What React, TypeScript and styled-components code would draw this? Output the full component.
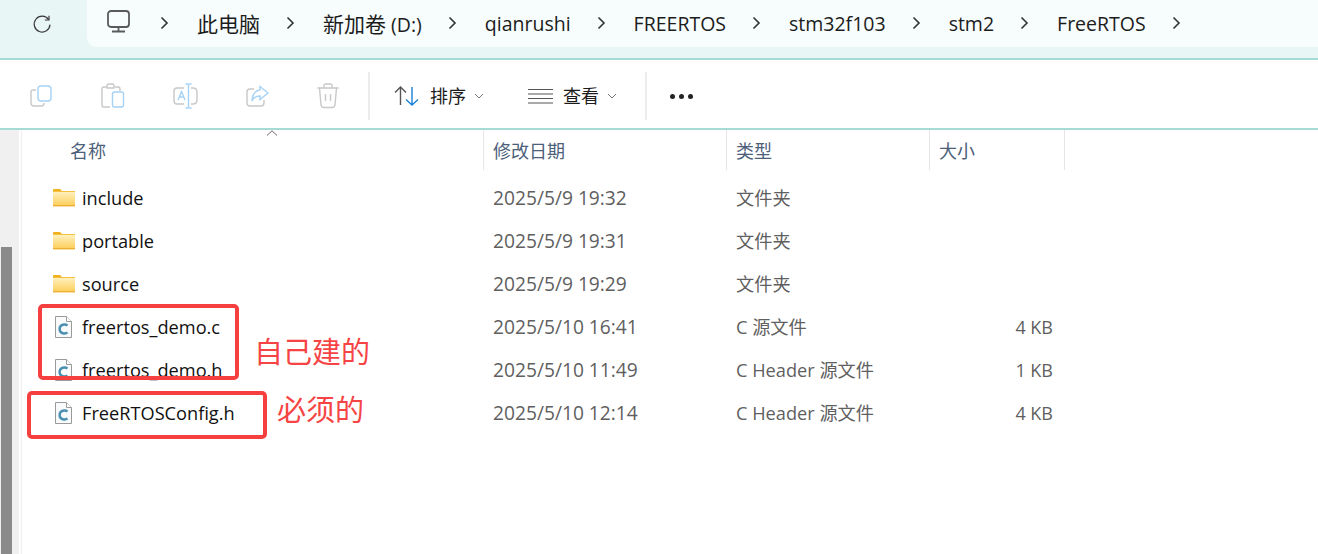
import React from "react";
import styled, { createGlobalStyle } from "styled-components";

const FONT = `"Open Sans", "Noto Sans CJK SC", sans-serif`;

const GlobalStyle = createGlobalStyle`
  html, body {
    margin: 0;
    padding: 0;
    background: #fff;
    overflow: hidden;
  }
  * {
    box-sizing: border-box;
  }
`;

const CRUMBS = [
  { cjk: "此电脑", text: "" },
  { cjk: "新加卷", text: " (D:)" },
  { cjk: "", text: "qianrushi" },
  { cjk: "", text: "FREERTOS" },
  { cjk: "", text: "stm32f103" },
  { cjk: "", text: "stm2" },
  { cjk: "", text: "FreeRTOS" },
];

const ROWS = [
  { name: "include", date: "2025/5/9 19:32", type: "文件夹", size: "", folder: true },
  { name: "portable", date: "2025/5/9 19:31", type: "文件夹", size: "", folder: true },
  { name: "source", date: "2025/5/9 19:29", type: "文件夹", size: "", folder: true },
  { name: "freertos_demo.c", date: "2025/5/10 16:41", type: "C 源文件", size: "4 KB", folder: false },
  { name: "freertos_demo.h", date: "2025/5/10 11:49", type: "C Header 源文件", size: "1 KB", folder: false },
  { name: "FreeRTOSConfig.h", date: "2025/5/10 12:14", type: "C Header 源文件", size: "4 KB", folder: false },
];

function Chevron() {
  return (
    <svg width="10" height="14" viewBox="0 0 10 14" fill="none" stroke="#333" strokeWidth="1.6">
      <path d="M1.5 1.5 L7 7 L1.5 12.5" />
    </svg>
  );
}

function SmallCaret() {
  return (
    <svg width="10" height="6" viewBox="0 0 10 6" fill="none" stroke="#777" strokeWidth="1">
      <path d="M1 1 L5 5 L9 1" />
    </svg>
  );
}

function FolderIcon() {
  return (
    <svg width="22" height="18" viewBox="0 0 22 18">
      <defs>
        <linearGradient id="folderFill" x1="0" y1="0" x2="0" y2="1">
          <stop offset="0" stopColor="#fff0bd" />
          <stop offset="1" stopColor="#fdd060" />
        </linearGradient>
      </defs>
      <path d="M0 1 Q0 0 1 0 H7 L9 2 H0 Z" fill="#f0b020" />
      <rect x="0" y="2" width="22" height="1" fill="#f5c040" />
      <rect x="0" y="3" width="22" height="13" fill="url(#folderFill)" />
      <rect x="0" y="16" width="22" height="1.4" fill="#eeb030" />
    </svg>
  );
}

function CFileIcon() {
  return (
    <svg width="17" height="22" viewBox="0 0 17 22">
      <path d="M0.5 0.5 H11.5 L16.5 5.5 V21.5 H0.5 Z" fill="#f8fafb" stroke="#9a9a9a" />
      <path d="M11.5 0.5 V5.5 H16.5" fill="#fff" stroke="#9a9a9a" />
      <path
        d="M12.4 9.6 C10.6 7.8 4.6 8 4.6 13 C4.6 18 10.6 18.2 12.4 16.4"
        fill="none"
        stroke="#4a8fb0"
        strokeWidth="2.4"
      />
    </svg>
  );
}

export default function App() {
  return (
    <Page>
      <GlobalStyle />
      <AddressBand>
        <RefreshButton>
          <svg width="20" height="20" viewBox="0 0 20 20" fill="none" stroke="#3a3a3a" strokeWidth="1.2">
            <path d="M16.6 5.6 A7.9 7.9 0 1 0 18 10.6" />
            <path d="M17 1.8 V6 H12.8" />
          </svg>
        </RefreshButton>
        <Breadcrumb>
          <PcIcon>
            <svg width="24" height="23" viewBox="0 0 24 23" fill="none" stroke="#5a5a5a" strokeWidth="1.8">
              <rect x="1" y="1" width="21" height="16" rx="3" />
              <path d="M11.5 17 V21 M5 21.5 H18" />
            </svg>
          </PcIcon>
          {CRUMBS.map((c) => (
            <Crumb key={c.cjk + c.text}>
              <Chevron />
              <CrumbText>
                {c.cjk && <CrumbCjk>{c.cjk}</CrumbCjk>}
                {c.text}
              </CrumbText>
            </Crumb>
          ))}
          <LastChevron>
            <Chevron />
          </LastChevron>
        </Breadcrumb>
      </AddressBand>

      <Toolbar>
        <ActionGroup>
          <ActionIcon>
            <svg width="24" height="24" viewBox="0 0 24 24" fill="none" strokeWidth="1.4">
              <path d="M7 6 H4 Q2 6 2 8 V19 Q2 22 5 22 H12 Q15 22 15 19" stroke="#c8c8c8" />
              <rect x="9" y="2" width="13" height="15" rx="3" stroke="#a5d2f5" />
            </svg>
          </ActionIcon>
          <ActionIcon>
            <svg width="24" height="26" viewBox="0 0 24 26" fill="none" strokeWidth="1.4">
              <path d="M6 4 H3 Q1 4 1 6 V22 Q1 24 3 24 H9" stroke="#c8c8c8" />
              <path d="M6 5 V2.5 Q6 1 8 1 H11 Q13 1 13 2.5 V5 Z" stroke="#c8c8c8" />
              <path d="M14 4 H17 Q19 4 19 6 V8" stroke="#c8c8c8" />
              <rect x="11.5" y="9" width="11" height="15" rx="2" stroke="#a5d2f5" />
            </svg>
          </ActionIcon>
          <ActionIcon>
            <svg width="26" height="26" viewBox="0 0 26 26" fill="none" strokeWidth="1.4">
              <path d="M11 5 H4 Q1 5 1 8 V18 Q1 21 4 21 H11" stroke="#c8c8c8" />
              <path d="M18 5 H20 Q24 5 24 9 V17 Q24 21 20 21 H18" stroke="#c8c8c8" />
              <path d="M5 17 L8.5 8.5 L12 17 M6.2 14 H10.8" stroke="#a5d2f5" />
              <path d="M15.5 2 V24 M12.5 1 H18.5 M12.5 25 H18.5" stroke="#a5d2f5" />
            </svg>
          </ActionIcon>
          <ActionIcon>
            <svg width="24" height="24" viewBox="0 0 24 24" fill="none" strokeWidth="1.4">
              <path d="M9 5 H5 Q2 5 2 8 V19 Q2 22 5 22 H16 Q19 22 19 19 V16" stroke="#c8c8c8" />
              <path d="M15 2.5 L23 9 L15 15.5 V12 Q9 12 7 17 Q7.5 7 15 6 Z" stroke="#a5d2f5" />
            </svg>
          </ActionIcon>
          <ActionIcon>
            <svg width="22" height="26" viewBox="0 0 22 26" fill="none" stroke="#c8c8c8" strokeWidth="1.4">
              <path d="M0.5 5 H21.5 M7 5 V3 Q7 1 9 1 H13 Q15 1 15 3 V5" />
              <path d="M2.5 5 L4 22 Q4.3 24.5 7 24.5 H15 Q17.7 24.5 18 22 L19.5 5" />
              <path d="M8.5 11 V18 M13.5 11 V18" />
            </svg>
          </ActionIcon>
        </ActionGroup>
        <Divider />
        <MenuButton $width={158} $pad={24}>
          <svg width="26" height="22" viewBox="0 0 26 22" fill="none" strokeWidth="1.4">
            <path d="M6.5 20 V2 M1 7.5 L6.5 2 L12 7.5" stroke="#555" />
            <path d="M18 2 V20 M12 14.5 L18 20 L24 14.5" stroke="#1a80d8" />
          </svg>
          <MenuLabel>排序</MenuLabel>
          <SmallCaret />
        </MenuButton>
        <MenuButton $width={117} $pad={0}>
          <svg width="25" height="16" viewBox="0 0 25 16" fill="none" stroke="#555" strokeWidth="1.2">
            <path d="M0 1.5 H25 M0 6 H25 M0 10.5 H25 M0 15 H25" />
          </svg>
          <MenuLabel>查看</MenuLabel>
          <SmallCaret />
        </MenuButton>
        <Divider />
        <MoreDots>
          <Dot />
          <Dot />
          <Dot />
        </MoreDots>
      </Toolbar>

      <Main>
        <ScrollTrack>
          <ScrollThumb />
        </ScrollTrack>
        <ListArea>
          <SortCaret>
            <svg width="12" height="6" viewBox="0 0 12 6" fill="none" stroke="#666" strokeWidth="1">
              <path d="M1 5.5 L6 0.8 L11 5.5" />
            </svg>
          </SortCaret>
          <HeaderRow>
            <HeaderCell $width={462} $pad={48}>名称</HeaderCell>
            <HeaderCell $width={243} $pad={9}>修改日期</HeaderCell>
            <HeaderCell $width={203} $pad={9}>类型</HeaderCell>
            <HeaderCell $width={135} $pad={9}>大小</HeaderCell>
          </HeaderRow>
          <Rows>
            {ROWS.map((r) => (
              <Row key={r.name}>
                <NameCell>
                  <IconSlot $file={!r.folder}>{r.folder ? <FolderIcon /> : <CFileIcon />}</IconSlot>
                  <NameText>{r.name}</NameText>
                </NameCell>
                <DateCell>{r.date}</DateCell>
                <TypeCell>{r.type}</TypeCell>
                <SizeCell>{r.size}</SizeCell>
              </Row>
            ))}
          </Rows>
          <RedBox $left={16} $top={174} $width={201} $height={76} />
          <RedBox $left={5} $top={261} $width={240} $height={48} />
          <Note $left={232} $top={200}>自己建的</Note>
          <Note $left={255} $top={258}>必须的</Note>
        </ListArea>
      </Main>
    </Page>
  );
}

const Page = styled.div`
  width: 1318px;
  height: 554px;
  display: flex;
  flex-direction: column;
  background: #fff;
  font-family: ${FONT};
  overflow: hidden;
`;
const AddressBand = styled.div`
  height: 60px;
  flex: none;
  display: flex;
  align-items: flex-start;
  background: #e8f7f5;
  border-bottom: 2px solid #a6dad5;
`;
const RefreshButton = styled.div`
  width: 87px;
  height: 47px;
  flex: none;
  display: flex;
  align-items: center;
  padding-left: 32px;
`;
const Breadcrumb = styled.div`
  flex: 1;
  height: 47px;
  display: flex;
  align-items: center;
  padding: 0 0 1px 20px;
  background: #f7fdfd;
  border-bottom-left-radius: 9px;
`;
const PcIcon = styled.div`
  display: flex;
  width: 53px;
  flex: none;
  margin-top: -3px;
`;
const Crumb = styled.div`
  display: flex;
  align-items: center;
  gap: 27px;
  margin-right: 26px;
  &:first-of-type {
    margin-right: 24px;
  }
`;
const CrumbText = styled.span`
  font-size: 19.5px;
  color: #1c1c1c;
  white-space: pre;
`;
const CrumbCjk = styled.span`
  font-size: 21px;
`;
const LastChevron = styled.div`
  display: flex;
`;
const Toolbar = styled.div`
  height: 70px;
  flex: none;
  display: flex;
  align-items: center;
  padding-top: 4px;
  background: #fff;
  border-bottom: 2px solid #a6dad5;
`;
const ActionGroup = styled.div`
  display: flex;
  width: 368px;
  flex: none;
  padding-left: 29px;
  gap: 48px;
  align-items: center;
`;
const ActionIcon = styled.div`
  width: 24px;
  flex: none;
  display: flex;
  & > svg {
    flex: none;
  }
`;
const Divider = styled.div`
  width: 2px;
  height: 48px;
  flex: none;
  background: #ececec;
`;
const MenuButton = styled.div<{ $width: number; $pad: number }>`
  display: flex;
  align-items: center;
  width: ${(p) => p.$width}px;
  flex: none;
  padding-left: ${(p) => p.$pad}px;
`;
const MenuLabel = styled.span`
  font-size: 18px;
  color: #1c1c1c;
  margin: -2px 8px 0 10px;
`;
const MoreDots = styled.div`
  display: flex;
  gap: 4px;
  padding-left: 23px;
`;
const Dot = styled.span`
  width: 5px;
  height: 5px;
  border-radius: 50%;
  background: #222;
`;
const Main = styled.div`
  flex: 1;
  display: flex;
  min-height: 0;
`;
const ScrollTrack = styled.div`
  width: 19px;
  flex: none;
  background: #f0f0f0;
  padding-top: 117px;
  padding-left: 1px;
`;
const ScrollThumb = styled.div`
  width: 11px;
  height: 100%;
  background: #8a8a8a;
`;
const ListArea = styled.div`
  position: relative;
  flex: 1;
  margin-left: 2px;
  border-left: 1px solid #efefef;
  background: #fff;
`;
const SortCaret = styled.div`
  position: absolute;
  left: 244px;
  top: 0;
  display: flex;
`;
const HeaderRow = styled.div`
  display: flex;
  height: 40px;
`;
const HeaderCell = styled.div<{ $width: number; $pad: number }>`
  width: ${(p) => p.$width}px;
  flex: none;
  padding-left: ${(p) => p.$pad}px;
  border-right: 1px solid #e6e6e6;
  display: flex;
  align-items: center;
  font-size: 18px;
  color: #4c607a;
`;
const Rows = styled.div`
  display: flex;
  flex-direction: column;
  padding-top: 6px;
`;
const Row = styled.div`
  display: flex;
  align-items: center;
  height: 43px;
  font-size: 18px;
`;
const NameCell = styled.div`
  width: 461px;
  flex: none;
  display: flex;
  align-items: center;
  padding-left: 31px;
`;
const IconSlot = styled.div<{ $file: boolean }>`
  width: 29px;
  flex: none;
  display: flex;
  padding-left: ${(p) => (p.$file ? 2 : 0)}px;
`;
const NameText = styled.span`
  font-size: 18.2px;
  color: #111;
`;
const DateCell = styled.div`
  width: 243px;
  flex: none;
  padding-left: 10px;
  font-size: 19.2px;
  color: #5f5f5f;
`;
const TypeCell = styled.div`
  width: 200px;
  flex: none;
  padding-left: 10px;
  margin-top: -2px;
  font-size: 18.2px;
  color: #5f5f5f;
`;
const SizeCell = styled.div`
  width: 127px;
  flex: none;
  text-align: right;
  color: #5f5f5f;
`;
const RedBox = styled.div<{ $left: number; $top: number; $width: number; $height: number }>`
  position: absolute;
  left: ${(p) => p.$left}px;
  top: ${(p) => p.$top}px;
  width: ${(p) => p.$width}px;
  height: ${(p) => p.$height}px;
  border: 4px solid #f64040;
  border-radius: 5px;
`;
const Note = styled.div<{ $left: number; $top: number }>`
  position: absolute;
  left: ${(p) => p.$left}px;
  top: ${(p) => p.$top}px;
  font-family: "Noto Sans CJK SC", sans-serif;
  font-size: 29px;
  line-height: 40px;
  color: #f64444;
  white-space: nowrap;
`;
